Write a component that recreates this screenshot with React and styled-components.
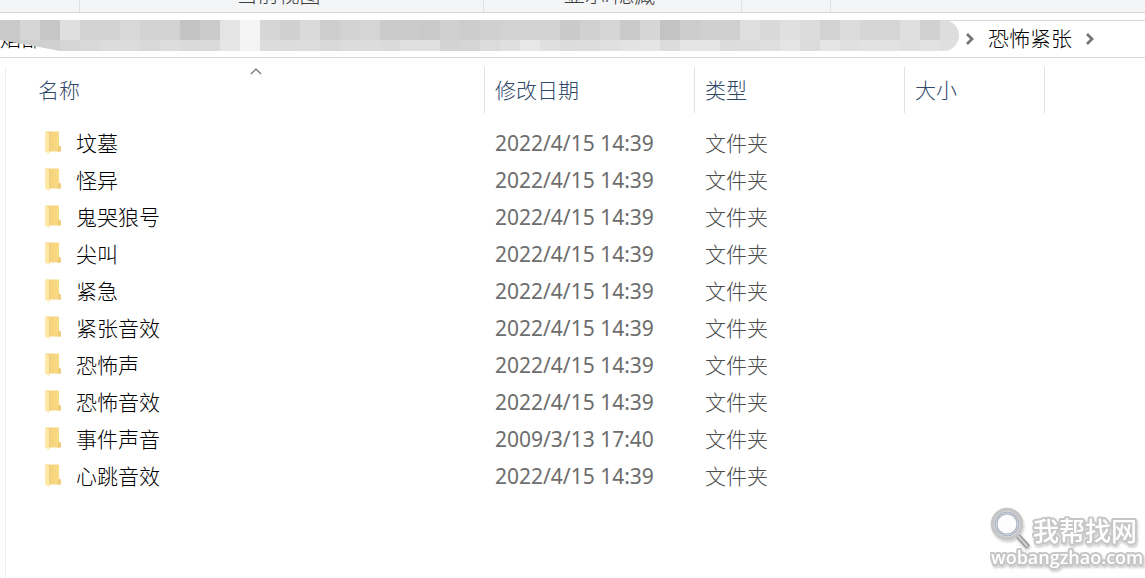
import styled, { createGlobalStyle } from "styled-components"

const GlobalStyle = createGlobalStyle`
    * {
        box-sizing: border-box;
    }
    body {
        margin: 0;
        background-color: #fff;
        font-family: "Noto Sans", "Noto Sans CJK SC", sans-serif;
        font-size: 21px;
        font-weight: 300;
        line-height: 28px;
        overflow: hidden;
    }
`

//styled components
const Container = styled.div`
    width: 100%;
    min-height: 100vh;
    display: flex;
    flex-direction: column;
    position: relative;
    overflow: hidden;
`

//ribbon
const Ribbon = styled.div`
    height: 13px;
    display: flex;
    align-items: flex-end;
    background-color: #f4f5f7;
    border-bottom: 1px solid #d6d7d9;
    overflow: hidden;
`

const Group = styled.div`
    flex: ${props => props.$grow ? "1" : "none"};
    width: ${props => props.$width}px;
    height: 28px;
    padding: 0 6px 4px 0;
    display: flex;
    align-items: flex-end;
    justify-content: center;
    color: #3c3c3c;
    border-right: ${props => props.$grow ? "none" : "1px solid #e0e1e3"};
`

//address bar
const AddressBar = styled.nav`
    height: 38px;
    margin-top: 7px;
    padding-bottom: 2px;
    display: flex;
    align-items: center;
    border-top: 1px solid #d9d9d9;
    border-bottom: 1px solid #d9d9d9;
    position: relative;
`

const Crumb = styled.a`
    color: #000;
    text-decoration: none;
    white-space: nowrap;
`

const HiddenPath = styled.div`
    width: 964px;
    height: 36px;
    flex: none;
    display: flex;
    align-items: center;
`

const Mosaic = styled.div`
    width: 959px;
    height: 31px;
    position: absolute;
    top: -1px;
    left: 0;
    border-radius: 0 16px 16px 0;
    clip-path: polygon(0 0, 100% 0, 100% 100%, 60px 100%, 34px 26px, 0 20px);
    overflow: hidden;
`

const MosaicRow = styled.div`
    height: ${props => props.$height}px;
    display: flex;
`

const Cell = styled.span`
    width: 20px;
    flex: none;
    background-color: #${props => props.$shade.repeat(3)};
`

const CrumbArrow = styled.svg`
    width: 12px;
    height: 14px;
    margin: 2px 12px 0 0;
    flex: none;
`

const LastArrow = styled(CrumbArrow)`
    margin-left: 12px;
`

//file list
const Pane = styled.main`
    flex: 1;
    margin: 9px 0 0 5px;
    border-left: 1px solid #eee;
`

const Table = styled.table`
    width: 100%;
    table-layout: fixed;
    border-collapse: separate;
    border-spacing: 0;
    text-align: left;
`

const Th = styled.th`
    width: ${props => props.$width ? props.$width + "px" : "auto"};
    height: 46px;
    padding: 0 0 0 ${props => props.$first ? 32 : 10}px;
    font-weight: 300;
    color: #2f4868;
    border-right: ${props => props.$width ? "1px solid #e2e2e2" : "none"};
    position: relative;
`

const SortMark = styled.svg`
    width: 12px;
    height: 7px;
    position: absolute;
    top: 1px;
    left: 244px;
`

const Row = styled.tr`
    height: 37px;
`

const Spacer = styled.tr`
    height: 11px;
`

const Td = styled.td`
    padding: 0 0 0 10px;
    color: #4c4c4c;
    white-space: nowrap;
`

const DateCell = styled(Td)`
    color: #6d6d6d;
    font-weight: 400;
`

const NameCell = styled.td`
    padding: 0 0 0 38px;
`

const FileName = styled.div`
    display: flex;
    align-items: center;
    gap: 14px;
    color: #000;
`

const FolderSvg = styled.svg`
    width: 18px;
    height: 24px;
    flex: none;
`

//watermark
const Watermark = styled.svg`
    width: 155px;
    height: 72px;
    position: absolute;
    right: 0;
    bottom: 0;
`

const topShades = "c9 d6 c6 df d3 d2 d8 d2 d2 c4 cb e4 f5 d6 d0 da ce d2 d5 cb cb c9 d0 cd d0 d2 d3 d3 ca d1 d5 c9 d6 c3 cd d0 d0 df d9 e0 dc d2 dc d6 d6 df d1 dd".split(" ")
const bottomShades = "c9 d0 d0 d6 d8 db db d8 dd da da e6 f3 dc dc dd d9 dc dc da e0 e0 d3 d5 db df e7 df dc dd e0 e3 e5 dc e5 e4 dc dd df e4 db e4 e0 e2 e2 df e2 df".split(" ")

const files = [
    { name: "坟墓", date: "2022/4/15 14:39" },
    { name: "怪异", date: "2022/4/15 14:39" },
    { name: "鬼哭狼号", date: "2022/4/15 14:39" },
    { name: "尖叫", date: "2022/4/15 14:39" },
    { name: "紧急", date: "2022/4/15 14:39" },
    { name: "紧张音效", date: "2022/4/15 14:39" },
    { name: "恐怖声", date: "2022/4/15 14:39" },
    { name: "恐怖音效", date: "2022/4/15 14:39" },
    { name: "事件声音", date: "2009/3/13 17:40" },
    { name: "心跳音效", date: "2022/4/15 14:39" },
]

const chevronPath = <path d="M3 2L8 7L3 12" fill="none" stroke="#757575" strokeWidth="2.8" />

const Folder = () => (
    <FolderSvg viewBox="0 0 18 24">
        <defs>
            <linearGradient id="folderBack" x1="0" x2="1">
                <stop offset="0" stopColor="#f3cf7a" />
                <stop offset="1" stopColor="#fbdc86" />
            </linearGradient>
        </defs>
        <path d="M2 0.5H15V14.5L17 16V20.5H4Z" fill="url(#folderBack)" />
        <path d="M14 16L15 14.5L17 16V20.5H13Z" fill="#f0cd7c" />
        <path d="M1 0.5L5.5 2.5V23L1 20.5Z" fill="#fee9a8" />
        <path d="M5.5 2.5V20.5" stroke="#ecc877" strokeWidth="0.8" />
    </FolderSvg>
)

const Logo = () => (
    <Watermark viewBox="0 0 155 72">
        <defs>
            <filter id="shadow" x="-10%" y="-10%" width="120%" height="130%">
                <feDropShadow dx="1" dy="2" stdDeviation="1.2" floodColor="#000" floodOpacity="0.2" />
            </filter>
        </defs>
        <g filter="url(#shadow)">
            <path d="M28 30L38 41" stroke="#c4c4c4" strokeWidth="6" />
            <path d="M28 30L38 41" stroke="#8f8f8f" strokeWidth="4.5" />
            <path d="M28 30L37.5 40.5" stroke="#cfcfcf" strokeWidth="2.5" />
            <circle cx="17" cy="18" r="14.5" fill="#fff" stroke="#c6c6c6" strokeWidth="3.5" />
            <circle cx="17" cy="18" r="11" fill="#fdfdfd" stroke="#a9b1bd" strokeWidth="3" />
            <circle cx="17" cy="18" r="11" fill="none" stroke="#d0d6de" strokeWidth="1" />
        </g>
        <g filter="url(#shadow)" fill="#fff" stroke="#c6c6c6" strokeWidth="4" strokeLinejoin="round" paintOrder="stroke">
            <text x="43" y="35" fontSize="26" fontWeight="500" fontFamily="Noto Sans CJK SC, sans-serif">我帮找网</text>
            <text x="1" y="58" fontSize="18" fontWeight="600" fontFamily="Open Sans, sans-serif">wobangzhao.com</text>
        </g>
    </Watermark>
)

const App = () => {
    return (
        <Container>
            <GlobalStyle />
            <Ribbon>
                <Group $width={80} />
                <Group $width={404}>当前视图</Group>
                <Group $width={258}>显示/隐藏</Group>
                <Group $width={89} />
                <Group $grow />
            </Ribbon>
            <AddressBar>
                <HiddenPath>
                    <Crumb href="#">焰部</Crumb>
                    <Mosaic>
                        <MosaicRow $height={20}>
                            {topShades.map((shade, i) => <Cell key={i} $shade={shade} />)}
                        </MosaicRow>
                        <MosaicRow $height={11}>
                            {bottomShades.map((shade, i) => <Cell key={i} $shade={shade} />)}
                        </MosaicRow>
                    </Mosaic>
                </HiddenPath>
                <CrumbArrow viewBox="0 0 12 14">{chevronPath}</CrumbArrow>
                <Crumb href="#">恐怖紧张</Crumb>
                <LastArrow viewBox="0 0 12 14">{chevronPath}</LastArrow>
            </AddressBar>
            <Pane>
                <Table>
                    <thead>
                        <tr>
                            <Th $width={479} $first>
                                名称
                                <SortMark viewBox="0 0 12 7">
                                    <path d="M1 6L6 1L11 6" fill="none" stroke="#666" strokeWidth="1.1" />
                                </SortMark>
                            </Th>
                            <Th $width={210}>修改日期</Th>
                            <Th $width={210}>类型</Th>
                            <Th $width={140}>大小</Th>
                            <Th />
                        </tr>
                    </thead>
                    <tbody>
                        <Spacer />
                        {files.map(file => (
                            <Row key={file.name}>
                                <NameCell>
                                    <FileName>
                                        <Folder />
                                        {file.name}
                                    </FileName>
                                </NameCell>
                                <DateCell>{file.date}</DateCell>
                                <Td>文件夹</Td>
                                <Td />
                                <Td />
                            </Row>
                        ))}
                    </tbody>
                </Table>
            </Pane>
            <Logo />
        </Container>
    )
}

export default App
